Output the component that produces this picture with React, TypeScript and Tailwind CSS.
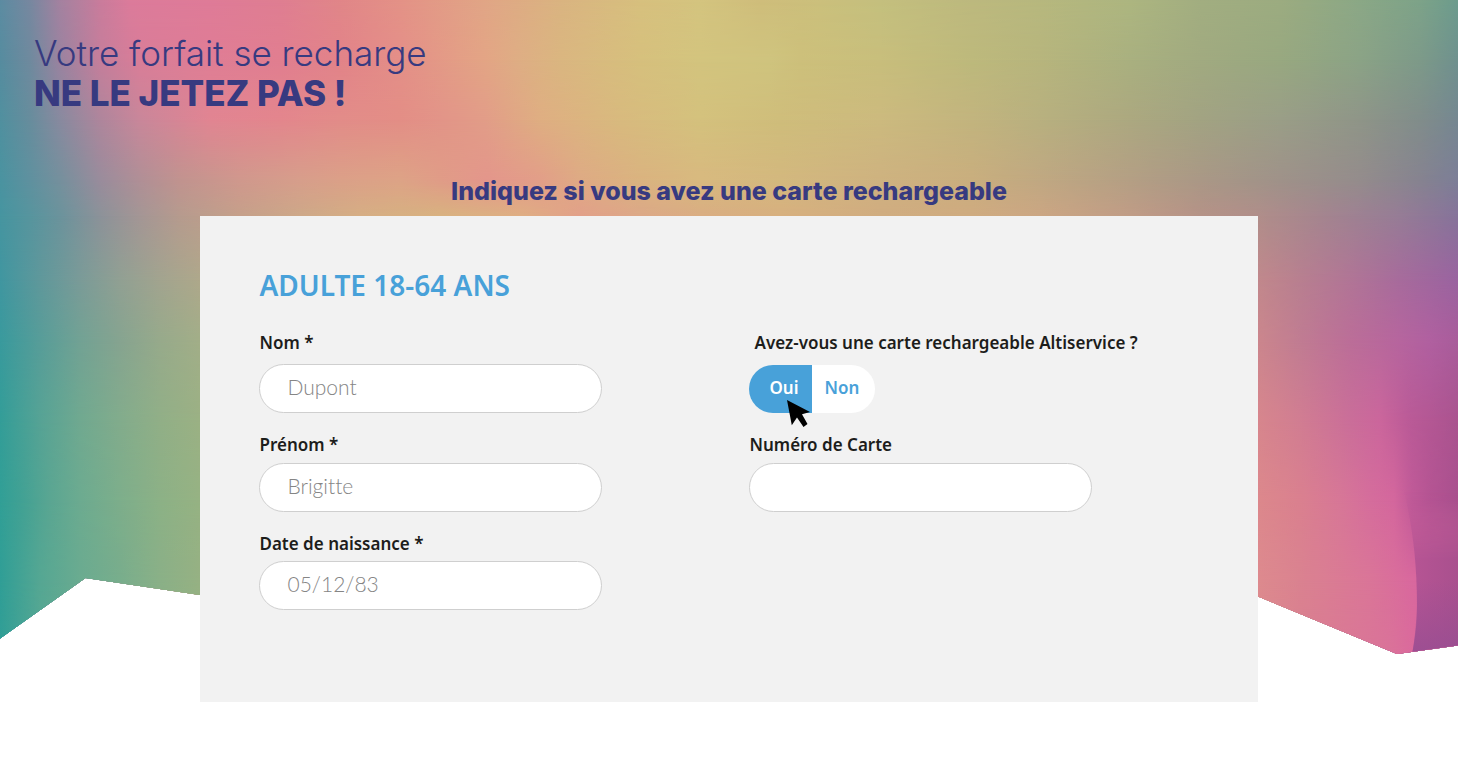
import { useState, type ReactNode } from 'react';

type Row = { y: number; stops: string };

/* Each row is a horizontal run of "x colour" stops; rows fade into each other vertically. */
const ROWS: Row[] = [
  { y: 0, stops: '0 5c8ca2,30 7788a0,60 a482a0,100 c97c9c,130 dc7b9b,210 df7b98,280 df7e92,340 e18689,400 e49287,486 e1a686,560 dab481,640 d7c07e,700 d4c47f,760 cfbd7b,820 cbc07c,880 c4c07e,972 bdb97e,1040 b7b87e,1130 adb680,1200 a2ae80,1280 9cac80,1360 8ba886,1420 7da389,1458 6c9c8d' },
  { y: 60, stops: '0 568c9f,30 6f8a9e,60 9a83a0,100 c57e9b,140 d97d98,210 df7d95,280 e17e90,340 e28389,400 e48f88,486 e3a585,520 deae84,560 dab680,640 d6c07d,700 d3c47e,770 cfc47e,800 cdc07b,880 c8be7c,972 bdb97c,1040 b7b57d,1130 a9b07f,1200 a1aa80,1280 98a880,1360 8ba386,1420 7d9a89,1458 6f918e' },
  { y: 120, stops: '0 50909f,30 678d9d,60 888a9f,100 ae869c,140 c9879a,210 e18592,280 e3868d,340 e28c89,400 e38e86,440 e29488,486 e29d88,540 dfae82,620 d8ba7e,700 d4c17d,780 cfbd7b,880 ccba7e,972 c2b47e,1040 b8b07f,1130 aca880,1200 a2a382,1280 9a9e87,1360 8f9588,1420 818d8b,1458 758791' },
  { y: 180, stops: '0 4a93a0,30 5f919f,60 75909d,100 998c9c,140 b08f96,180 c1938f,240 d0988d,300 d79e8b,340 dba088,400 dda386,440 e09c87,486 e3968b,540 e29e88,580 deaa84,640 dab380,700 d8b97f,780 d3b87e,880 ceb280,972 c9ae7e,1040 c0a882,1130 b49f84,1200 aa9886,1280 9f9289,1360 948c8c,1420 868390,1458 7c7e97' },
  { y: 216, stops: '0 4695a0,30 57959e,60 6b939c,100 8c9299,140 a49695,180 b69b8e,240 c5a08a,300 cda888,360 d5ae84,440 d8b280,520 dfae83,580 e2a089,640 dca887,700 d9ad82,780 d7b07f,880 d0ac80,972 cfab80,1040 cba683,1130 c09c86,1200 b59287,1258 b08e8a,1320 a5858f,1400 967c96,1458 86739a' },
  { y: 280, stops: '0 4096a0,40 5f989b,80 7a9b98,120 91a093,160 a2a48f,200 aea88b,1258 c1888c,1300 b87f90,1350 b17596,1400 a76b9c,1458 9a63a0' },
  { y: 340, stops: '0 399a9d,40 579d99,80 72a294,120 86a490,160 97aa8b,200 a2ae88,1258 cb868d,1300 c07c92,1350 bb6e98,1400 b6659e,1430 b060a0,1458 a95c9b' },
  { y: 420, stops: '0 339d98,40 56a395,80 70a990,120 82ac8c,160 91af87,200 9bb184,1258 d7868d,1300 d17d92,1350 ca6e99,1380 cb669c,1410 ba5a97,1458 aa538f' },
  { y: 500, stops: '0 319f96,20 40a194,50 5aa692,80 6cab90,120 7dae8b,160 8cb186,200 96b283,1258 dc888c,1300 da808f,1340 d77797,1370 d56d9c,1394 d4679d,1412 c05a98,1430 b55493,1458 a9508e' },
  { y: 580, stops: '0 309e96,40 55a793,80 6aab90,120 78ad8c,160 8ab087,200 96b183,1258 dd8a8e,1300 da8290,1370 da7598,1414 d9689e,1458 d9689e' },
  { y: 660, stops: '0 309e96,40 55a793,80 6aab90,200 96b183,1258 dd8b8d,1300 da7f90,1390 da7399,1415 db699c,1458 db699c' },
];

function Backdrop() {
  return (
    <svg
      aria-hidden="true"
      viewBox="0 0 1458 660"
      preserveAspectRatio="none"
      className="absolute inset-x-0 top-0 -z-10 h-[660px] w-full"
    >
      <defs>
        <clipPath id="skyline">
          <path d="M0 0H1458V645.500L1397 654L1258 596.500L729 670L200 595L85.500 578L0 638.500Z" />
        </clipPath>
        {ROWS.map((row, i) => (
          <linearGradient key={row.y} id={`row${i}`} gradientUnits="userSpaceOnUse" x1="0" x2="1458" y1="0" y2="0">
            {row.stops.split(',').map((s) => {
              const [x, c] = s.split(' ');
              return <stop key={x} offset={Number(x) / 1458} stopColor={`#${c}`} />;
            })}
          </linearGradient>
        ))}
        {ROWS.slice(1).map((row, i) => (
          <g key={row.y}>
            <linearGradient id={`fade${i + 1}`} gradientUnits="userSpaceOnUse" x1="0" x2="0" y1={ROWS[i].y} y2={row.y}>
              <stop offset="0" stopColor="#fff" stopOpacity="0" />
              <stop offset="1" stopColor="#fff" />
            </linearGradient>
            <mask id={`mask${i + 1}`} maskUnits="userSpaceOnUse" x="0" y="0" width="1458" height="660">
              <rect y={ROWS[i].y} width="1458" height={660 - ROWS[i].y} fill={`url(#fade${i + 1})`} />
            </mask>
          </g>
        ))}
        <linearGradient id="foldColor" gradientUnits="userSpaceOnUse" x1="1405" x2="1458" y1="0" y2="0">
          <stop offset="0" stopColor="#b85595" />
          <stop offset="1" stopColor="#a9508e" />
        </linearGradient>
        <linearGradient id="foldShade" gradientUnits="userSpaceOnUse" x1="0" x2="0" y1="580" y2="655">
          <stop offset="0" stopColor="#964d92" stopOpacity="0" />
          <stop offset="1" stopColor="#964d92" stopOpacity=".8" />
        </linearGradient>
        <linearGradient id="foldFade" gradientUnits="userSpaceOnUse" x1="0" x2="0" y1="490" y2="560">
          <stop offset="0" stopColor="#fff" stopOpacity="0" />
          <stop offset="1" stopColor="#fff" />
        </linearGradient>
        <mask id="foldMask" maskUnits="userSpaceOnUse" x="1380" y="480" width="78" height="180">
          <rect x="1380" y="480" width="78" height="180" fill="url(#foldFade)" />
        </mask>
      </defs>
      <g clipPath="url(#skyline)">
        {ROWS.map((row, i) => (
          <rect
            key={row.y}
            width="1458"
            height="660"
            fill={`url(#row${i})`}
            mask={i ? `url(#mask${i})` : undefined}
          />
        ))}
        <g mask="url(#foldMask)">
          <path d="M1404 490C1412 525 1417 560 1417 605C1417 625 1415 640 1411 660H1458V490Z" fill="url(#foldColor)" />
          <path d="M1417 580C1417.500 620 1415 640 1411 660H1458V580Z" fill="url(#foldShade)" />
        </g>
      </g>
    </svg>
  );
}

function Cursor() {
  return (
    <svg
      aria-hidden="true"
      viewBox="0 0 24 28"
      className="pointer-events-none absolute top-[35px] left-[38px] h-7 w-6"
    >
      <path d="M0 0L23 12L15 14.300L20.500 24L16.500 27L10 17.500L4.800 25.300Z" />
    </svg>
  );
}

const labelClass = 'text-[17px] leading-6 font-semibold text-[#1d1d1b]';

function Field({ id, label, placeholder, gap }: { id: string; label: string; placeholder?: string; gap: string }) {
  return (
    <div className={`flex flex-col ${gap}`}>
      <label htmlFor={id} className={labelClass}>
        {label}
      </label>
      <input
        id={id}
        type="text"
        placeholder={placeholder}
        className="h-[49px] w-full max-w-[343px] rounded-full border border-[#cfcfcf] bg-white px-[27px] pb-[5px] font-['Lato',sans-serif] text-[21px] font-light text-[#1d1d1b] [font-variant-ligatures:none] outline-none placeholder:text-[#858585] placeholder:opacity-100"
      />
    </div>
  );
}

function Choice({ checked, onChange, className, children }: { checked: boolean; onChange: () => void; className: string; children: ReactNode }) {
  return (
    <label
      className={`flex h-12 w-[63px] cursor-pointer items-center justify-center pb-0.5 text-[17px] font-semibold ${className} ${
        checked ? 'bg-[#48a1d9] text-white' : 'bg-white text-[#48a1d9]'
      }`}
    >
      <input type="radio" name="carte" checked={checked} onChange={onChange} className="sr-only" />
      {children}
    </label>
  );
}

export default function App() {
  const [hasCard, setHasCard] = useState(true);
  return (
    <main className="relative isolate min-h-screen bg-white pb-16 font-['Noto_Sans',sans-serif]">
      <Backdrop />
      <h1 className="px-[34px] pt-[33px] font-['Inter',sans-serif] text-[35px] leading-10 font-light text-[#373a80]">
        Votre forfait se recharge
        <strong className="block font-extrabold">NE LE JETEZ PAS !</strong>
      </h1>
      <h2 className="mt-[62px] text-center font-['Inter',sans-serif] text-[25px] leading-8 font-extrabold text-[#373a80]">
        Indiquez si vous avez une carte rechargeable
      </h2>
      <form className="mx-auto mt-[9px] w-[72.5%] bg-[#f2f2f2] pt-[49px] pr-[18px] pb-[92px] pl-[59px]">
        <h3 className="text-[28px] leading-10 font-semibold text-[#48a1d9]">ADULTE 18-64 ANS</h3>
        <div className="mt-[26px] grid grid-cols-2">
          <div className="flex flex-col gap-5">
            <Field id="nom" label="Nom *" placeholder="Dupont" gap="gap-[9px]" />
            <Field id="prenom" label="Prénom *" placeholder="Brigitte" gap="gap-1.5" />
            <Field id="naissance" label="Date de naissance *" placeholder="05/12/83" gap="gap-[5px]" />
          </div>
          <div className="flex flex-col gap-5">
            <fieldset className="h-[82px]">
              <legend className={`mb-[10px] pl-[5px] ${labelClass}`}>Avez-vous une carte rechargeable Altiservice ?</legend>
              <div className="relative flex w-fit">
                <Choice checked={hasCard} onChange={() => setHasCard(true)} className="rounded-l-full pl-1.5">
                  Oui
                </Choice>
                <Choice checked={!hasCard} onChange={() => setHasCard(false)} className="rounded-r-full pr-1">
                  Non
                </Choice>
                <Cursor />
              </div>
            </fieldset>
            <Field id="numero" label="Numéro de Carte" gap="gap-1.5" />
          </div>
        </div>
      </form>
    </main>
  );
}
